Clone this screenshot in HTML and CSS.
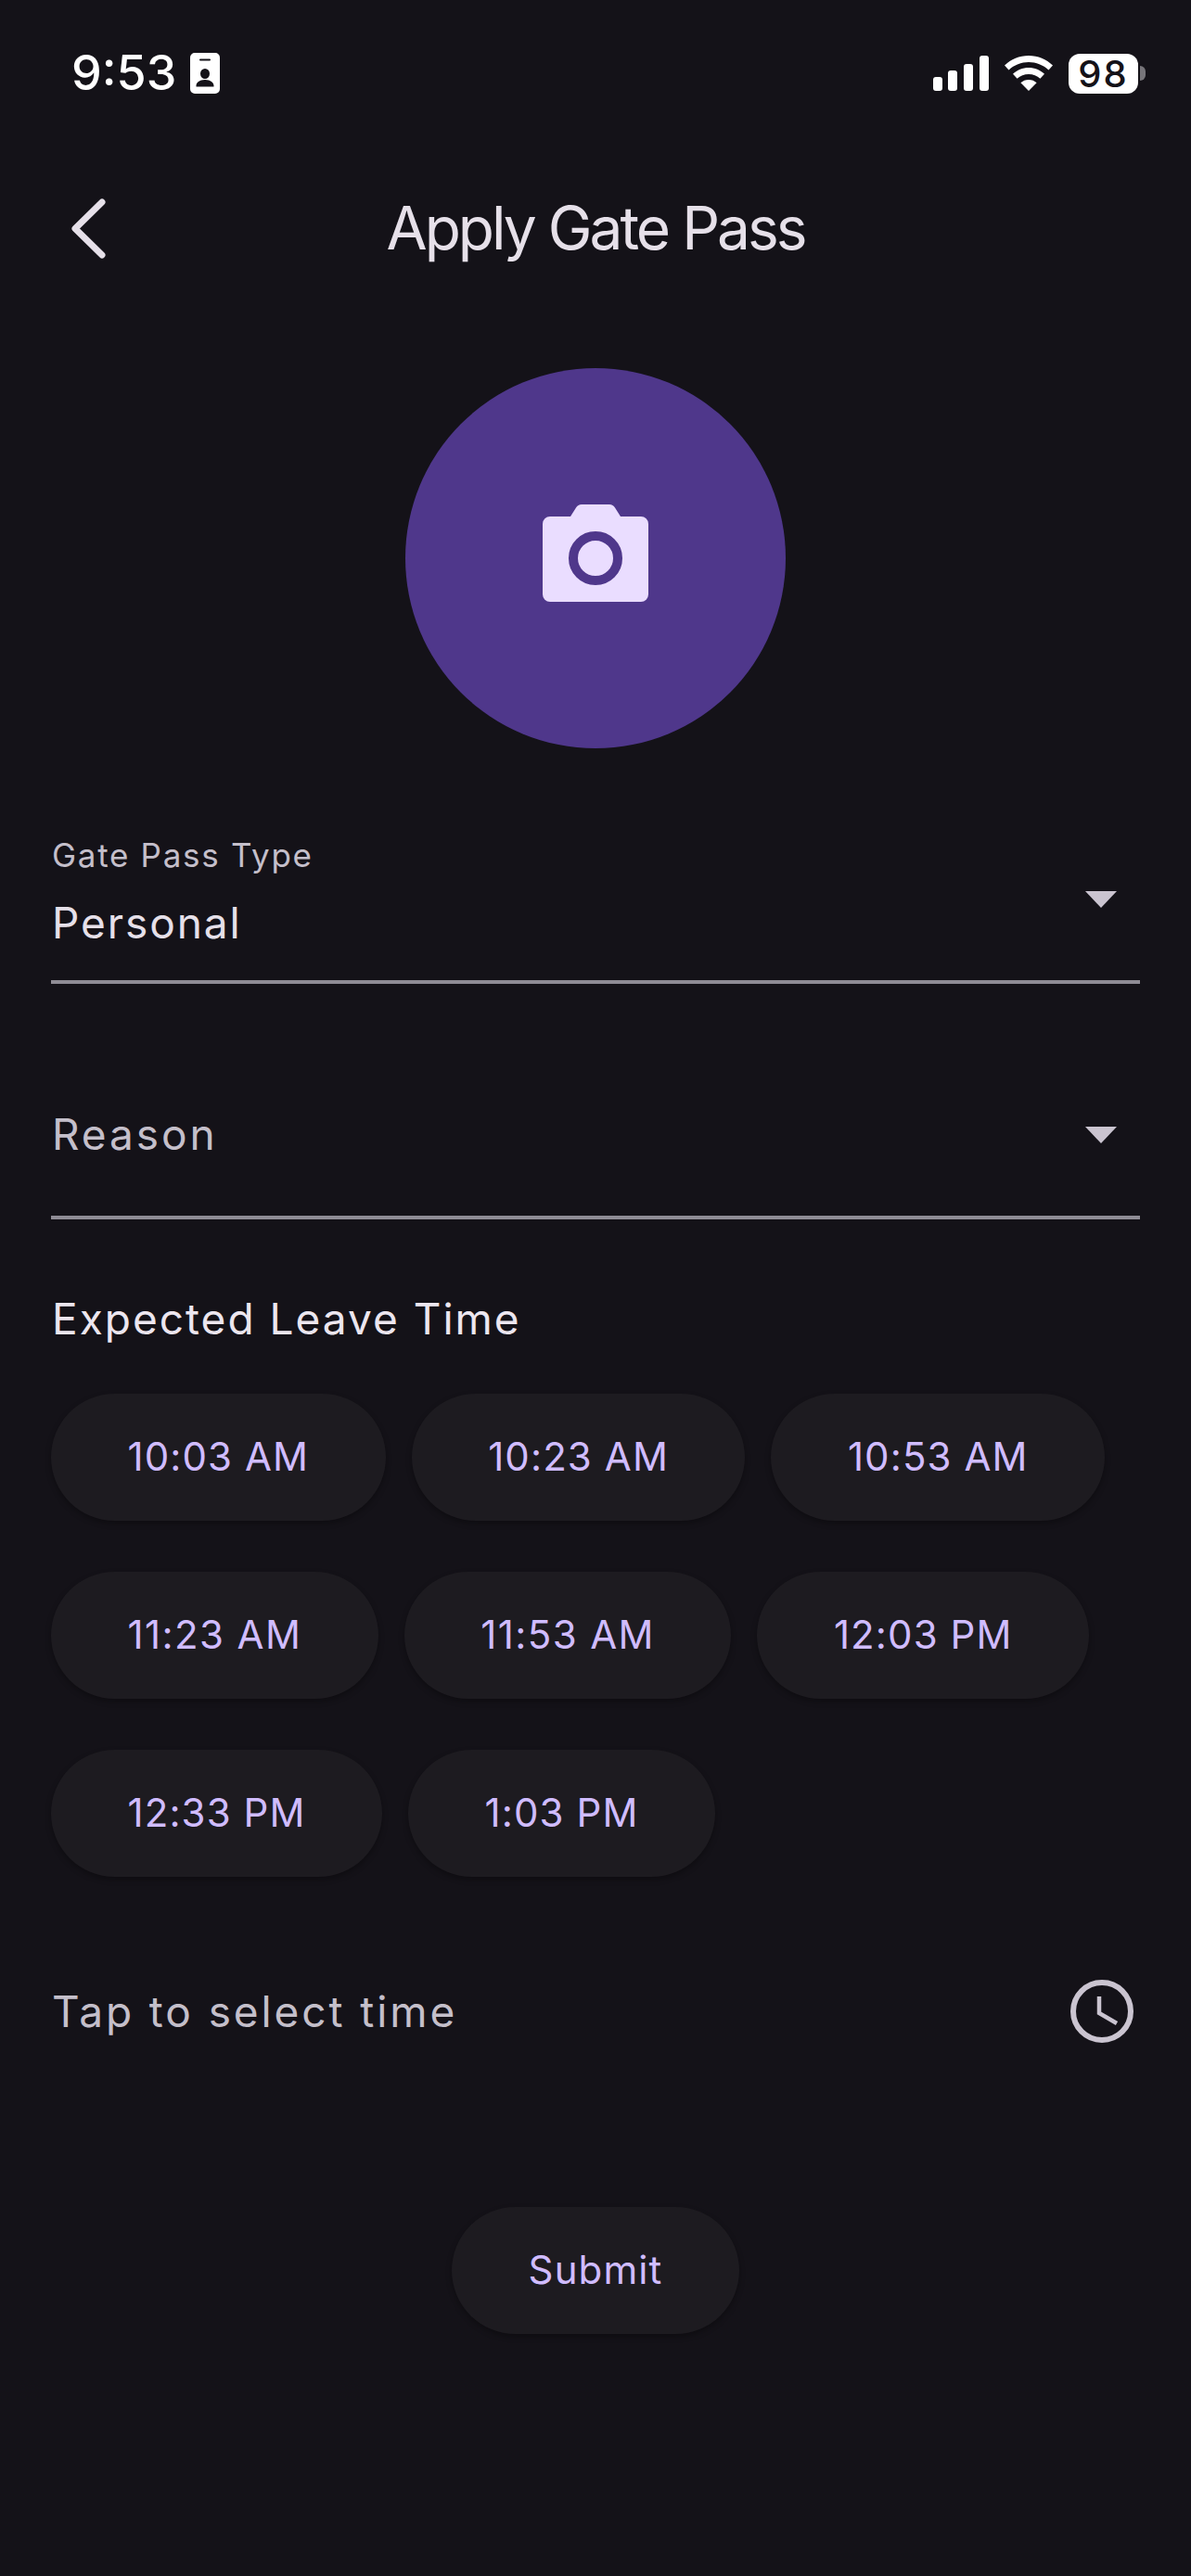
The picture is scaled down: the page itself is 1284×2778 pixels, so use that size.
FILE: index.html
```html
<!DOCTYPE html>
<html lang="en">
<head>
	<meta charset="UTF-8">
	<title>Apply Gate Pass</title>
	<link rel="stylesheet" href="styles.css">
</head>
<body>
<main class="screen">

	<div class="status-bar">
		<div class="status-left">
			<span class="clock">9:53</span>
			<svg class="id-icon" viewBox="0 0 32 44">
				<path fill="#fff" fill-rule="evenodd" d="M5 0h22a5 5 0 0 1 5 5v34a5 5 0 0 1-5 5H5a5 5 0 0 1-5-5V5a5 5 0 0 1 5-5zM11 6.500a1 1 0 0 0 0 2h10a1 1 0 0 0 0-2zM16 17a5 5.500 0 0 0-5 5.500a5 5.500 0 0 0 10 0a5 5.500 0 0 0-5-5.500zM16 29c-6 0-9.500 3-9.500 6.500v1h19v-1c0-3.500-3.500-6.500-9.500-6.500z"/>
			</svg>
		</div>
		<div class="status-right">
			<svg class="signal-icon" viewBox="0 0 60 38">
				<rect x="0" y="23" width="10" height="15" rx="3"/>
				<rect x="16" y="16" width="10" height="22" rx="3"/>
				<rect x="33" y="9" width="10" height="29" rx="3"/>
				<rect x="50" y="0" width="10" height="38" rx="3"/>
			</svg>
			<svg class="wifi-icon" viewBox="0 0 52 38">
				<path d="M26 0c10 0 19 4 26 10.500l-4.500 5C41.500 10 34 7 26 7S10.500 10 4.500 15.500L0 10.500C7 4 16 0 26 0z"/>
				<path d="M26 13c6.500 0 12.500 2.500 17 6.800l-4.600 5C35 21.800 30.700 20 26 20s-9 1.800-12.400 4.800L9 19.800C13.500 15.500 19.500 13 26 13z"/>
				<path d="M26 26c3.300 0 6.300 1.200 8.600 3.300L26 38l-8.600-8.700C19.700 27.200 22.700 26 26 26z"/>
			</svg>
			<div class="battery">
				<span class="battery-level">98</span>
				<span class="battery-nub"></span>
			</div>
		</div>
	</div>

	<header class="top-bar">
		<svg class="back-icon" viewBox="0 0 37 65">
			<path d="M33 4L4 32.500L33 61"/>
		</svg>
		<h1>Apply Gate Pass</h1>
	</header>

	<div class="photo-circle">
		<svg class="camera-icon" viewBox="0 0 114 105">
			<path fill="#eaddff" d="M8 13h22l6-9.500Q38 0 42 0h30q4 0 6 3.500L84 13h22a8 8 0 0 1 8 8v76a8 8 0 0 1-8 8H8a8 8 0 0 1-8-8V21a8 8 0 0 1 8-8z"/>
			<circle cx="57" cy="58" r="24" fill="none" stroke="#4f378b" stroke-width="10"/>
		</svg>
	</div>

	<form class="form">
		<div class="field field-filled">
			<div>
				<div class="field-label">Gate Pass Type</div>
				<div class="field-value">Personal</div>
			</div>
			<span class="arrow"></span>
		</div>

		<div class="field field-empty">
			<div class="field-hint">Reason</div>
			<span class="arrow"></span>
		</div>

		<h2 class="section-title">Expected Leave Time</h2>

		<div class="chips">
			<button type="button" class="pill">10:03 AM</button>
			<button type="button" class="pill">10:23 AM</button>
			<button type="button" class="pill">10:53 AM</button>
			<button type="button" class="pill pill-ones">11:23 AM</button>
			<button type="button" class="pill pill-ones">11:53 AM</button>
			<button type="button" class="pill">12:03 PM</button>
			<button type="button" class="pill">12:33 PM</button>
			<button type="button" class="pill">1:03 PM</button>
		</div>

		<div class="time-row">
			<span class="field-hint">Tap to select time</span>
			<svg class="clock-icon" viewBox="0 0 68 68">
				<circle cx="34" cy="34" r="31"/>
				<path class="clock-hands" d="M31 18v18l19 11"/>
			</svg>
		</div>

		<div class="submit-row">
			<button type="button" class="pill">Submit</button>
		</div>
	</form>

</main>
</body>
</html>
```

FILE: styles.css
```css
* {
	box-sizing: border-box;
}

html, body {
	margin: 0;
	background: #141218;
}

body {
	font-family: Inter, "Noto Sans", sans-serif;
	color: #e6e0e9;
}

.screen {
	width: 1284px;
	height: 2778px;
	overflow: hidden;
}

/* status bar */
.status-bar {
	height: 158px;
	padding: 0 49px 0 77px;
	display: flex;
	justify-content: space-between;
	align-items: center;
}

.status-left {
	display: flex;
	align-items: center;
	gap: 15px;
}

.clock {
	font-size: 52px;
	font-weight: 500;
	line-height: 60px;
	color: #fff;
}

.id-icon {
	width: 32px;
	height: 44px;
}

.status-right {
	display: flex;
	align-items: center;
}

.signal-icon {
	width: 60px;
	height: 38px;
	fill: #fff;
	margin-right: 17px;
}

.wifi-icon {
	width: 52px;
	height: 38px;
	fill: #fff;
	margin-right: 17px;
}

.battery {
	display: flex;
	align-items: center;
}

.battery-level {
	width: 75px;
	height: 43px;
	border-radius: 12px;
	background: #fff;
	color: #141218;
	font-size: 40px;
	font-weight: 500;
	line-height: 44px;
	letter-spacing: 2px;
	text-align: center;
}

.battery-nub {
	width: 6px;
	height: 16px;
	margin-left: 2px;
	border-radius: 0 6px 6px 0;
	background: #77757a;
}

/* top bar */
.top-bar {
	height: 176px;
	padding-left: 77px;
	display: grid;
	grid-template-columns: 37px 1fr 114px;
	align-items: center;
}

.back-icon {
	width: 37px;
	height: 65px;
	fill: none;
	stroke: #e6e0e9;
	stroke-width: 7;
	stroke-linecap: round;
	stroke-linejoin: round;
}

.top-bar h1 {
	margin: 0;
	font-size: 64px;
	font-weight: 400;
	line-height: 80px;
	text-align: center;
	letter-spacing: -3px;
}

/* photo */
.photo-circle {
	width: 410px;
	height: 410px;
	margin: 63px auto 0;
	padding-bottom: 11px;
	border-radius: 50%;
	background: #4f378b;
	display: flex;
	align-items: center;
	justify-content: center;
}

.camera-icon {
	width: 114px;
	height: 105px;
}

/* form */
.form {
	padding: 0 55px;
}

.field {
	display: flex;
	justify-content: space-between;
	border-bottom: 4px solid #8f8c95;
	padding-right: 25px;
	padding-left: 1px;
}

.field-filled {
	height: 254px;
	padding-top: 93px;
}

.field-empty {
	height: 254px;
	padding-top: 132px;
	align-items: flex-start;
}

.field-label {
	font-size: 35px;
	line-height: 44px;
	letter-spacing: 1.700px;
	color: #c4bfca;
}

.field-value {
	margin-top: 21px;
	font-size: 46px;
	line-height: 60px;
	letter-spacing: 1.900px;
	color: #e6e0e9;
}

.field-hint {
	font-size: 46px;
	line-height: 60px;
	letter-spacing: 2.900px;
	color: #c4bfca;
}

.arrow {
	width: 0;
	height: 0;
	border-left: 17px solid transparent;
	border-right: 17px solid transparent;
	border-top: 18px solid #cac4d0;
}

.field-filled .arrow {
	margin-top: 61px;
}

.field-empty .arrow {
	margin-top: 22px;
}

.section-title {
	margin: 77px 0 0 1px;
	font-size: 46px;
	font-weight: 400;
	line-height: 60px;
	letter-spacing: 2px;
	color: #ece6ef;
}

.chips {
	margin-top: 51px;
	display: flex;
	flex-wrap: wrap;
	gap: 55px 28px;
}

.pill {
	height: 137px;
	padding: 0 82.500px 2px;
	border: 0;
	border-radius: 69px;
	background: #1d1b20;
	box-shadow: 0 3px 6px rgba(0, 0, 0, 0.3);
	font-family: Inter, "Noto Sans", sans-serif;
	font-size: 42px;
	font-weight: 400;
	letter-spacing: 1.100px;
	color: #d0bcff;
}

.pill-ones {
	letter-spacing: 1.400px;
}

.time-row {
	margin-top: 111px;
	height: 68px;
	padding: 0 7px 0 1px;
	display: flex;
	justify-content: space-between;
	align-items: center;
}

.clock-icon {
	width: 68px;
	height: 68px;
	fill: none;
	stroke: #cac4d0;
	stroke-width: 6;
}

.clock-hands {
	stroke-width: 4.500;
}

.submit-row {
	margin-top: 177px;
	display: flex;
	justify-content: center;
}
```
